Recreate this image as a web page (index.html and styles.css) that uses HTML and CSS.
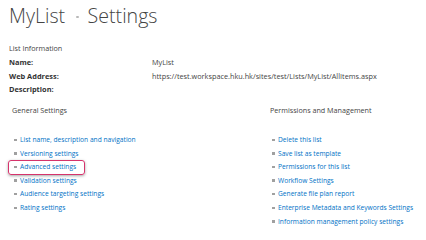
FILE: index.html
```html
<!DOCTYPE html>
<html>
<head>
<meta charset="utf-8">
<link rel="stylesheet" href="styles.css">
</head>
<body>
<div class="page">
  <h1 class="title"><span>MyList</span><span class="sep"></span><span>Settings</span></h1>
  <div class="section-head">List Information</div>
  <div class="info">
    <div class="label">Name:</div><div class="value">MyList</div>
    <div class="label">Web Address:</div><div class="value">https://test.workspace.hku.hk/sites/test/Lists/MyList/AllItems.aspx</div>
    <div class="label">Description:</div><div class="value"></div>
  </div>
  <div class="cols">
    <div class="col left">
      <div class="col-head">General Settings</div>
      <ul class="links">
        <li><a>List name, description and navigation</a></li>
        <li><a>Versioning settings</a></li>
        <li class="hl"><a>Advanced settings</a></li>
        <li><a>Validation settings</a></li>
        <li><a>Audience targeting settings</a></li>
        <li><a>Rating settings</a></li>
      </ul>
    </div>
    <div class="col right">
      <div class="col-head">Permissions and Management</div>
      <ul class="links">
        <li><a>Delete this list</a></li>
        <li><a>Save list as template</a></li>
        <li><a>Permissions for this list</a></li>
        <li><a>Workflow Settings</a></li>
        <li><a>Generate file plan report</a></li>
        <li><a>Enterprise Metadata and Keywords Settings</a></li>
        <li><a>Information management policy settings</a></li>
      </ul>
    </div>
  </div>
</div>
</body>
</html>
```
FILE: styles.css
```css
html, body {
  margin: 0;
  padding: 0;
  background: #ffffff;
}
body {
  font-family: "Open Sans", "Noto Sans", sans-serif;
  color: #444444;
  width: 426px;
  height: 237px;
  overflow: hidden;
}
.page {
  padding: 0 0 0 9px;
}
.title {
  margin: 0;
  padding-top: 2px;
  height: 28px;
  font-weight: 300;
  font-size: 19.6px;
  line-height: 26px;
  color: #444;
  display: flex;
  align-items: center;
  white-space: nowrap;
}
.title .sep {
  width: 2.5px;
  height: 2.5px;
  border-radius: 50%;
  background: #b8b8b8;
  margin: 2px 9px 0 11px;
}
.section-head {
  margin-top: 12px;
  font-size: 7.2px;
  line-height: 12px;
  color: #444;
}
.info {
  display: grid;
  grid-template-columns: 143px 1fr;
  margin-top: 2.3px;
  font-size: 7.3px;
  line-height: 13.3px;
}
.label {
  font-weight: 700;
  font-size: 7.4px;
  color: #333;
  white-space: nowrap;
}
.value {
  color: #444;
  min-height: 13.3px;
  white-space: nowrap;
}
.cols {
  display: grid;
  grid-template-columns: 258px 1fr;
  margin-top: 7.7px;
}
.col-head {
  font-size: 7.2px;
  line-height: 12px;
  padding-left: 3px;
  color: #444;
  white-space: nowrap;
}
.links {
  list-style: none;
  margin: 17.2px 0 0 0;
  padding: 0 0 0 5px;
  font-size: 6.65px;
}
.links li {
  position: relative;
  height: 13.6px;
  line-height: 13.6px;
  padding-left: 6px;
  white-space: nowrap;
}
.links li::before {
  content: "";
  position: absolute;
  left: 0;
  top: 5.5px;
  width: 2.5px;
  height: 2.5px;
  background: #a0a0a0;
}
.links a {
  color: #0072c6;
  text-decoration: none;
}
.links li.hl::after {
  content: "";
  position: absolute;
  left: -6px;
  top: -0.5px;
  width: 75px;
  height: 13px;
  border: 1.5px solid #d6336c;
  border-radius: 3px;
  box-shadow: 0 1px 3px rgba(0,0,0,0.35);
}
```
